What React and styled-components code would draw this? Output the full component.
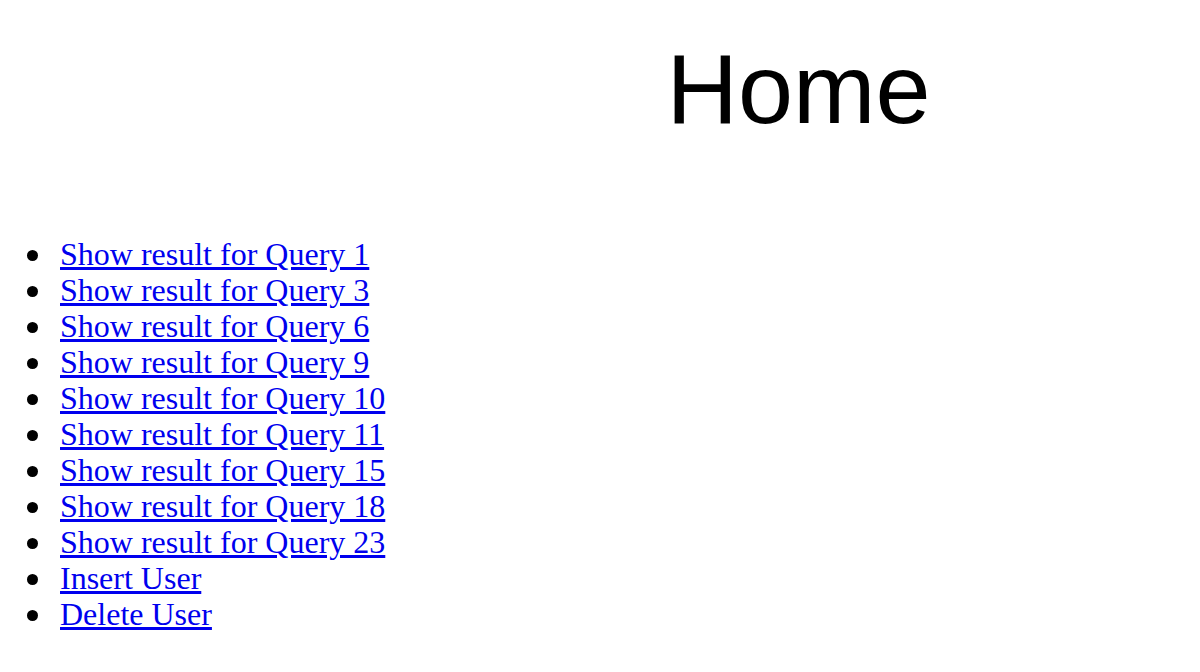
import React from "react";
import styled, { createGlobalStyle } from "styled-components";

const GlobalStyle = createGlobalStyle`
  body {
    margin: 0;
    background: #fff;
  }
`;

const Page = styled.div`
  display: flex;
  flex-direction: column;
`;

const Header = styled.header`
  display: flex;
  justify-content: center;
  padding-left: 397px;
  padding-top: 31px;
`;

const Title = styled.h1`
  margin: 0;
  font-family: "Liberation Sans", Arial, sans-serif;
  font-weight: 400;
  font-size: 99px;
  line-height: 115px;
  color: #000;
`;

const LinkList = styled.ul`
  margin: 90px 0 0;
  padding-left: 60px;
  font-family: "Liberation Serif", "Times New Roman", serif;
  font-size: 32px;
  line-height: 36px;
  list-style: none;
`;

// bigger disc than the default marker, like the reference
const Item = styled.li`
  position: relative;

  &::before {
    content: "";
    position: absolute;
    left: -33px;
    top: 14px;
    width: 11px;
    height: 11px;
    border-radius: 50%;
    background: #000;
  }
`;

const QueryLink = styled.a`
  color: #0000ee;
  text-decoration: underline;
`;

const links = [
  "Show result for Query 1",
  "Show result for Query 3",
  "Show result for Query 6",
  "Show result for Query 9",
  "Show result for Query 10",
  "Show result for Query 11",
  "Show result for Query 15",
  "Show result for Query 18",
  "Show result for Query 23",
  "Insert User",
  "Delete User",
];

const App = () => {
  return (
    <Page>
      <GlobalStyle />
      <Header>
        <Title>Home</Title>
      </Header>
      <LinkList>
        {links.map((label) => (
          <Item key={label}>
            <QueryLink href="#">{label}</QueryLink>
          </Item>
        ))}
      </LinkList>
    </Page>
  );
};

export default App;
